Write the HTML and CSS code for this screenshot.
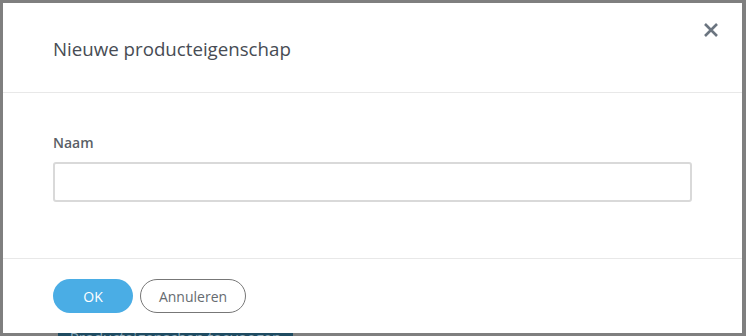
FILE: index.html
```html
<!DOCTYPE html>
<html lang="nl">
<head>
    <meta charset="UTF-8">
    <meta name="viewport" content="width=device-width, initial-scale=1.0">
    <title>Nieuwe producteigenschap</title>
    <link rel="stylesheet" href="styles.css">
</head>
<body>
    <div class="page">
        <div class="modal">
            <div class="modal-header">
                <h2>Nieuwe producteigenschap</h2>
                <button class="close" aria-label="Sluiten">
                    <svg width="16" height="16" viewBox="0 0 16 16">
                        <path d="M2 2 L14 14 M14 2 L2 14" stroke="#6b7580" stroke-width="2.6" stroke-linecap="butt"/>
                    </svg>
                </button>
            </div>
            <div class="modal-body">
                <label for="naam">Naam</label>
                <input type="text" id="naam">
            </div>
            <div class="modal-footer">
                <button class="btn btn-primary">OK</button>
                <button class="btn btn-outline">Annuleren</button>
            </div>
        </div>
        <div class="behind">
            <span class="behind-btn">Producteigenschap toevoegen</span>
        </div>
    </div>
</body>
</html>
```

FILE: styles.css
```css
html, body {
    margin: 0;
    padding: 0;
}
body {
    font-family: "Open Sans", Arial, sans-serif;
    background-color: #7f7f7f;
    height: 336px;
    overflow: hidden;
}
.page {
    padding: 3px 4px 0 3px;
    height: 333px;
    overflow: hidden;
}
.modal {
    background-color: #fff;
    height: 330px;
    display: flex;
    flex-direction: column;
    position: relative;
}
.modal-header {
    height: 89px;
    border-bottom: 1px solid #e8e8e8;
    display: flex;
    align-items: center;
    padding: 0 50px;
}
.modal-header h2 {
    margin: 0;
    font-size: 18.7px;
    font-weight: 400;
    color: #474c54;
    padding-top: 2px;
}
.close {
    position: absolute;
    top: 19px;
    right: 23px;
    border: none;
    background: none;
    padding: 0;
    width: 16px;
    height: 16px;
    cursor: pointer;
}
.close svg {
    display: block;
}
.modal-body {
    padding: 41px 50px 0 50px;
    height: 124px;
    border-bottom: 1px solid #e8e8e8;
    display: flex;
    flex-direction: column;
}
label {
    font-size: 14px;
    line-height: 18px;
    font-weight: 600;
    color: #5a5f66;
    margin-bottom: 10px;
}
input {
    height: 40px;
    box-sizing: border-box;
    border: 2px solid #d9d9d9;
    border-radius: 3px;
    font-family: inherit;
    font-size: 14px;
    padding: 0 10px;
    outline: none;
}
.modal-footer {
    padding: 20px 50px;
    display: flex;
    gap: 7px;
}
.btn {
    height: 34px;
    border-radius: 17px;
    font-family: inherit;
    font-size: 14px;
    cursor: pointer;
    box-sizing: border-box;
}
.btn-primary {
    width: 80px;
    background-color: #4aade5;
    border: none;
    color: #fff;
}
.btn-outline {
    width: 106px;
    background-color: #fff;
    border: 1px solid #777;
    color: #666b70;
}
.behind {
    padding-left: 55px;
}
.behind-btn {
    display: block;
    width: 235px;
    height: 20px;
    background-color: #1f4b61;
    color: #8fa9b8;
    font-size: 15px;
    line-height: 8px;
    text-align: center;
}
```
